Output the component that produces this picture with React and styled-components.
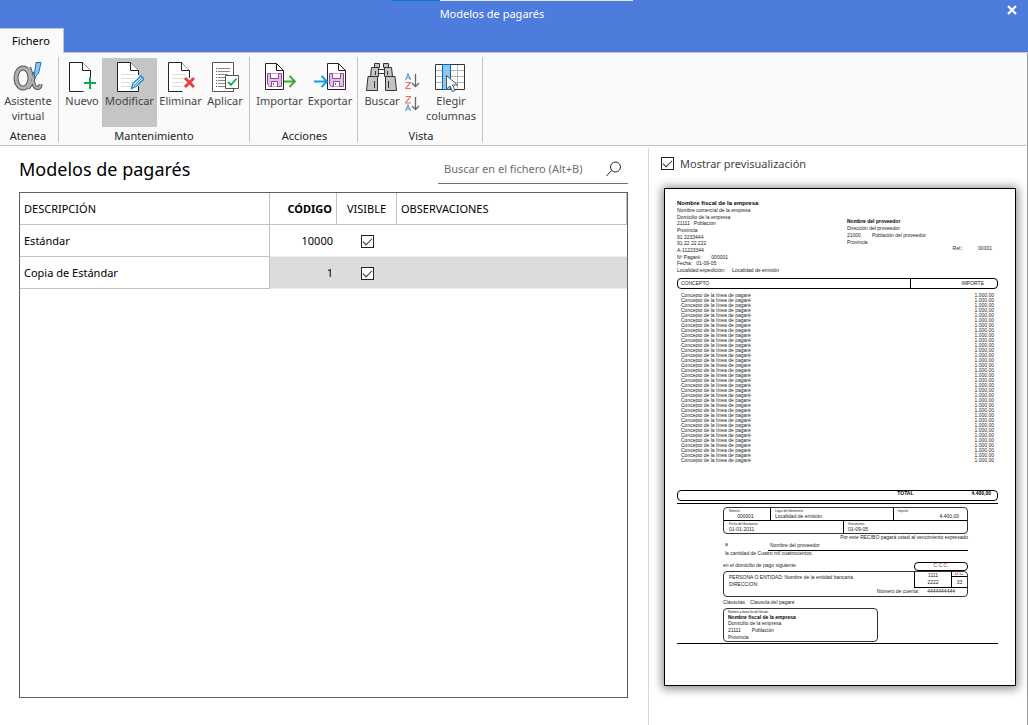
import React from 'react';
import styled, { createGlobalStyle } from 'styled-components';

const Global = createGlobalStyle`
  *, *::before, *::after { box-sizing: border-box; }
  body { margin: 0; background: #fff; }
  button, input { font: inherit; color: inherit; }
`;

const Window = styled.div`
  min-height: 100vh;
  display: flex;
  flex-direction: column;
  background: #fff;
  color: #000;
  font: 11px/15px "Noto Sans", "Open Sans", sans-serif;
`;

/* ---------- title bar ---------- */

const TitleBar = styled.header`
  position: relative;
  display: flex;
  flex-direction: column;
  background: #4d7cdc;
  border-bottom: 1px solid #c3c3c3;
`;

const Progress = styled.div`
  position: absolute;
  top: 0;
  left: 392px;
  width: 241px;
  height: 1px;
  background: linear-gradient(to right, #0078d7 20%, #e6e6e6 20%);
`;

const TitleRow = styled.div`
  display: grid;
  grid-template-columns: 44px 1fr 44px;
  height: 28px;
`;

const WindowTitle = styled.div`
  grid-column: 2;
  text-align: center;
  line-height: 28px;
  color: #fff;
  padding-right: 44px;
`;

const CloseButton = styled.button`
  display: flex;
  justify-content: flex-end;
  border: 0;
  background: none;
  padding: 5px 11px 0 0;
`;

const Tab = styled.button`
  align-self: flex-start;
  height: 25px;
  margin-bottom: -1px;
  padding: 0 13px 2px 12px;
  border: 0;
  border-top: 1px solid #c3c3c3;
  border-right: 1px solid #c3c3c3;
  background: #fafafa;
  color: #000;
`;

/* ---------- ribbon ---------- */

const Ribbon = styled.nav`
  display: flex;
  padding: 4px 0 3px;
  background: #fafafa;
  border-bottom: 1px solid #c3c3c3;
  border-right: 1px solid #999;
`;

const Group = styled.section`
  display: flex;
  flex-direction: column;
  align-items: center;
  padding: 1px ${p => 6 - (p.$start || 3)}px 0 ${p => p.$start || 3}px;
  border-right: 1px solid #c3c3c3;
`;

const GroupLabel = styled.h2`
  margin: 3px 0 0;
  font: inherit;
  line-height: 12px;
  color: #222;
`;

const Tools = styled.div`
  display: flex;
`;

const Tool = styled.button`
  display: flex;
  flex-direction: column;
  align-items: center;
  width: ${p => p.$w}px;
  height: 69px;
  padding: 3px 0 0;
  border: 0;
  background: ${p => (p.$active ? '#c5c5c5' : 'transparent')};
  color: #444;
  white-space: nowrap;
  text-align: center;
`;

const SortTools = styled.div`
  display: flex;
  flex-direction: column;
  gap: 7px;
  width: 20px;
  padding: 15px 0 0 3px;
`;

const SortButton = styled.button`
  display: block;
  padding: 0;
  border: 0;
  background: none;
  height: 16px;
`;

const Icon = styled.svg`
  display: block;
  flex: none;
`;

/* ---------- content ---------- */

const Content = styled.main`
  flex: 1;
  display: grid;
  grid-template-columns: minmax(0, 1fr) 379px;
  border-right: 1px solid #999;
  padding-top: 2px;
`;

const ListPane = styled.section`
  display: flex;
  flex-direction: column;
  padding: 0 20px 27px 19px;
`;

const ListHead = styled.div`
  display: flex;
  justify-content: space-between;
  align-items: flex-start;
  height: 44px;
`;

const Heading = styled.h1`
  margin: 8px 0 0;
  font-size: 18px;
  line-height: 26px;
  font-weight: 400;
`;

const Search = styled.label`
  display: flex;
  align-items: center;
  width: 190px;
  height: 30px;
  margin-top: 6px;
  padding: 0 6px;
  border-bottom: 1px solid #707070;
`;

const SearchInput = styled.input`
  flex: 1;
  min-width: 0;
  padding: 0;
  border: 0;
  outline: 0;
  background: none;
  &::placeholder { color: #6d6d6d; opacity: 1; }
`;

const TableFrame = styled.div`
  flex: 1;
  border: 1px solid #5f5f63;
`;

const Table = styled.table`
  width: 100%;
  table-layout: fixed;
  border-collapse: separate;
  border-spacing: 0;
`;

const Th = styled.th`
  width: ${p => p.$w || 'auto'};
  height: 32px;
  padding: 0 4px;
  border-right: 1px solid #c3c3c3;
  border-bottom: 1px solid #c3c3c3;
  font-weight: ${p => (p.$bold ? 700 : 400)};
  text-align: ${p => p.$align || 'left'};
`;

const Td = styled.td`
  height: 32px;
  padding: 0 4px;
  text-align: ${p => p.$align || 'left'};
  background: ${p => (p.$selected ? '#dcdcdc' : '#fff')};
  border-bottom: 1px solid #eee;
`;

const NameCell = styled(Td)`
  background: #fff;
  border-right: 1px solid #c3c3c3;
  border-bottom: 1px solid #c3c3c3;
`;

const Check = styled.input`
  appearance: none;
  display: inline-block;
  flex: none;
  width: 13px;
  height: 13px;
  margin: 0;
  border: 1px solid #222;
  background: #fff;
  vertical-align: middle;
  &:checked::after {
    content: '';
    display: block;
    width: 9px;
    height: 5px;
    margin: 2px 0 0 1px;
    border: solid #333;
    border-width: 0 0 1px 1px;
    transform: rotate(-45deg);
  }
`;

/* ---------- preview ---------- */

const PreviewPane = styled.aside`
  border-left: 1px solid #d8d8d8;
  padding: 7px 11px 0 15px;
`;

const PreviewToggle = styled.label`
  display: flex;
  align-items: center;
  gap: 6px;
  height: 16px;
  margin: 0 0 17px -3px;
  color: #444;
`;

const Sheet = styled.article`
  height: 498px;
  padding: 10px 17px 0 12px;
  border: 1px solid #000;
  background: #fff;
  box-shadow: 0 1px 9px 2px rgba(0, 0, 0, 0.45);
  color: #222;
  font: 5px/7px "Liberation Sans", Arial, sans-serif;
  white-space: nowrap;
`;

const Parties = styled.div`
  display: grid;
  grid-template-columns: 170px 1fr;
  height: 79px;
`;

const Line = styled.div`
  display: flex;
  gap: ${p => p.$gap || 0}px;
  justify-content: ${p => (p.$end ? 'flex-end' : 'flex-start')};
  font-weight: ${p => (p.$bold ? 700 : 400)};
  line-height: ${p => p.$lh || 7}px;
  color: ${p => (p.$bold ? '#000' : 'inherit')};
`;

const CompanyName = styled(Line)`
  font-size: ${p => (p.$large ? 6 : 5)}px;
`;

const Reference = styled(Line)`
  padding-right: 6px;
`;

const Provider = styled.div`
  padding-top: 18px;
`;

const ConceptHead = styled.div`
  display: grid;
  grid-template-columns: 232px 1fr;
  height: 11px;
  line-height: 9px;
  border: 1px solid #000;
  border-radius: 4px;
  span { padding: 0 3px; }
  span + span { border-left: 1px solid #000; padding-right: 13px; text-align: right; }
`;

const Concepts = styled.div`
  height: 201px;
  padding: 4px 4px 0;
`;

const ConceptLine = styled.div`
  display: flex;
  justify-content: space-between;
  line-height: 5px;
`;

const Total = styled.div`
  display: flex;
  justify-content: flex-end;
  gap: 58px;
  height: 11px;
  padding-right: 6px;
  border: 1px solid #000;
  border-radius: 4px;
  color: #000;
  font-weight: 700;
  line-height: 5px;
`;

const Receipt = styled.div`
  margin-top: 2px;
  padding: 3px 30px 0 46px;
  height: 141px;
  border-top: 1px solid #000;
  border-bottom: 1px solid #000;
`;

const Box = styled.div`
  border: 1px solid #333;
  border-radius: 4px;
`;

const Cells = styled.div`
  display: grid;
  grid-template-columns: ${p => p.$cols};
  height: 12px;
  & + & { height: 13px; border-top: 1px solid #000; }
`;

const Cell = styled.div`
  padding: 1px 8px 0 5px;
  line-height: 7px;
  text-align: ${p => p.$align || 'left'};
  & + & { border-left: 1px solid #000; padding-left: 4px; }
`;

const Caption = styled.div`
  font-size: 3px;
  line-height: 4px;
  text-align: left;
`;

const Payee = styled.div`
  display: grid;
  grid-template-columns: 43px 1fr;
  height: 8px;
  padding-left: 2px;
  line-height: 7px;
  span + span { border-bottom: 1px solid #000; line-height: 9px; padding-left: 2px; }
`;

const Amount = styled(Line)`
  padding-left: 2px;
`;

const Domicile = styled.div`
  display: flex;
  justify-content: space-between;
  align-items: flex-end;
  height: 14px;
  span { padding-bottom: 2px; }
`;

const Ccc = styled.div`
  width: 54px;
  height: 9px;
  border: 1px solid #000;
  border-radius: 4px;
  color: #8a3a3a;
  text-align: center;
  line-height: 4px;
`;

const Bank = styled(Box)`
  display: flex;
  flex-direction: column;
  height: 26px;
`;

const BankTop = styled.div`
  display: flex;
  justify-content: space-between;
  height: 16px;
`;

const BankText = styled.div`
  padding: 2px 0 0 5px;
`;

const Account = styled(Line)`
  padding-right: 12px;
`;

const Codes = styled.div`
  display: grid;
  grid-template-columns: 36px 1fr;
  width: 53px;
  border: solid #000;
  border-width: 0 0 1px 1px;
  text-align: center;
  div + div { border-left: 1px solid #000; }
`;

const Small = styled.p`
  margin: 0;
  height: 5px;
  line-height: 3px;
  border-bottom: 1px solid #000;
  color: #8a3a3a;
`;

const ControlDigits = styled.p`
  margin: 0;
  line-height: 10px;
`;

const Issuer = styled(Box)`
  width: 155px;
  height: 34px;
  padding: 1px 4px 0;
`;

/* ---------- icons ---------- */

const Page = ({ lines, cut }) => (
  <>
    <path d={cut || 'M15.5 30.5H1.5V1.5H14.5L22.5 9.5V17'} fill="#fff" stroke="#222" />
    <path d="M14.5 1.5V9.5H22.5" fill="#fff" stroke="#222" />
    {lines && <path d="M5 13.5H19M5 17.5H19M5 21.5H17M5 25.5H15" stroke="#dcdcdc" />}
  </>
);

const alphaTail = 'M23 11C22 17 19 24 16 27M17 7C20.500 12 20 27 25.500 27C27.500 27 28.500 25.500 28.500 23';

const AlphaIcon = () => (
  <Icon width="32" height="32" viewBox="0 0 32 32" fill="none">
    <ellipse cx="11" cy="17" rx="7" ry="10" stroke="#555" strokeWidth="5" />
    <path d={alphaTail} stroke="#555" strokeWidth="4" />
    <ellipse cx="11" cy="17" rx="7" ry="10" stroke="#b0b0b0" strokeWidth="3" />
    <path d={alphaTail} stroke="#b0b0b0" strokeWidth="2" />
    <path d="M24 1.500H29L26.500 12.500L22 17Z" fill="#8cc8f5" stroke="#1673ba" />
  </Icon>
);

const NewIcon = () => (
  <Icon width="28" height="32" viewBox="0 0 28 32" fill="none">
    <Page />
    <path d="M22 16V28M16 22H28" stroke="#12a84f" strokeWidth="2" />
  </Icon>
);

const EditIcon = () => (
  <Icon width="28" height="32" viewBox="0 0 28 32" fill="none">
    <Page lines cut="M22.500 25V30.500H1.500V1.500H14.500L22.500 9.500V14" />
    <path d="M15.500 27.500L17 22.500L25 15L28 18L20 25.500Z" fill="#d4eaf8" stroke="#2089cc" strokeWidth="1.300" />
    <path d="M18 25L26 17M15.500 27.500L17.500 26" stroke="#2089cc" />
  </Icon>
);

const DeleteIcon = () => (
  <Icon width="28" height="32" viewBox="0 0 28 32" fill="none">
    <Page lines />
    <path d="M18 17L27 26M27 17L18 26" stroke="#ee3e3e" strokeWidth="3" />
  </Icon>
);

const ApplyIcon = () => (
  <Icon width="28" height="32" viewBox="0 0 28 32" fill="none">
    <path d="M22.500 27V30.500H1.500V1.500H22.500V14" fill="#fff" stroke="#555" />
    <path d="M7 7.500H19M7 10.500H19M7 13.500H17M7 16.500H14M7 19.500H14M7 22.500H14M7 25.500H14" stroke="#888" />
    <path d="M5.500 7V8M5.500 13V14M5.500 22V23" stroke="#12a84f" />
    <path d="M5.500 10V11M5.500 16V17M5.500 19V20M5.500 25V26" stroke="#d02020" />
    <path d="M14.500 14.500H27.500V27.500H14.500Z" fill="#fff" stroke="#555" />
    <path d="M17 21L20 24L25.500 17.500" stroke="#12a84f" strokeWidth="1.800" />
  </Icon>
);

const Floppy = ({ x }) => (
  <g transform={`translate(${x} 0)`}>
    <path d="M.5 12.500H14.500V25.500H2.500L.5 23.500Z" fill="#dfc3e3" stroke="#93479c" />
    <path d="M3.500 12.500V17.500H11.500V12.500" fill="#fff" stroke="#93479c" />
    <path d="M4.500 25.500V20.500H10.500V25.500" fill="#fff" stroke="#93479c" />
    <path d="M6.500 22V24" stroke="#93479c" />
  </g>
);

const ImportIcon = () => (
  <Icon width="32" height="32" viewBox="0 0 32 32" fill="none">
    <path d="M1.500 2.500H12.500L19.500 9.500V28.500H1.500Z" fill="#fff" stroke="#222" />
    <path d="M12.500 2.500V9.500H19.500" stroke="#222" />
    <Floppy x={3} />
    <path d="M20 20.500H30M25.500 15L31 20.500L25.500 26" stroke="#3fa535" strokeWidth="1.800" />
  </Icon>
);

const ExportIcon = () => (
  <Icon width="34" height="32" viewBox="0 0 34 32" fill="none">
    <path d="M14.500 2.500H25.500L32.500 9.500V28.500H14.500Z" fill="#fff" stroke="#222" />
    <path d="M25.500 2.500V9.500H32.500" stroke="#222" />
    <Floppy x={16} />
    <path d="M1 20.500H13M8.500 15L14 20.500L8.500 26" stroke="#0c9ae0" strokeWidth="1.800" />
  </Icon>
);

const BinocularsIcon = () => (
  <Icon width="32" height="32" viewBox="0 0 32 32" fill="#c3c3c3" stroke="#333">
    <path d="M8.500 2.500H13.500V6.500H8.500ZM17.500 2.500H22.500V6.500H17.500Z" />
    <path d="M12.500 8.500H18.500V12.500H12.500Z" fill="#fff" />
    <path d="M5.500 6.500H12.500V15.500H4.500ZM18.500 6.500H25.500L26.500 15.500H18.500Z" />
    <path d="M2 15.500H11.500V29.500H.5ZM19.500 15.500H29L30.500 29.500H19.500Z" />
    <path d="M9.500 10V14M21.500 10V14M8.500 20V27M22.500 20V27" />
  </Icon>
);

const SortIcon = ({ down }) => (
  <Icon width="15" height="16" viewBox="0 0 15 16" fill="none">
    <path d={down ? 'M.5 7L3 .5L5.500 7M1.500 5H4.500' : 'M.5 15L3 9L5.500 15M1.500 13H4.500'} stroke="#5aa0d0" strokeWidth="1.200" />
    <path d={down ? 'M.5 9.500H5.500L.5 15.500H6' : 'M.5 .5H5.500L.5 7H6'} stroke="#ef6b6b" strokeWidth="1.200" />
    <path d="M10.500 1V14M7 10L10.500 13.500L14 10" stroke="#666" strokeWidth="1.300" />
  </Icon>
);

const ColumnsIcon = () => (
  <Icon width="32" height="32" viewBox="0 0 32 32" fill="none">
    <path d="M.5 3.500H29.500V28.500H.5Z" fill="#fff" stroke="#333" />
    <path d="M1 9.500H29M1 15.500H29M1 21.500H29M22.500 4V28" stroke="#b5b5b5" />
    <path d="M7.500 3.500H15.500V28.500H7.500Z" fill="#8ec7ef" stroke="#0a66ae" />
    <path d="M11.500 14.500V28L15 25L17.500 30.500L20 29.500L17.500 24H22.500Z" fill="#fff" stroke="#555" />
  </Icon>
);

const SearchIcon = () => (
  <Icon width="16" height="16" viewBox="0 0 16 16" fill="none" stroke="#222">
    <circle cx="9.500" cy="6" r="5" />
    <path d="M5.500 9.500L.5 15" />
  </Icon>
);

const CloseIcon = () => (
  <Icon width="10" height="10" viewBox="0 0 10 10">
    <path d="M1 1L9 9M9 1L1 9" stroke="#fff" strokeWidth="2.200" />
  </Icon>
);

/* ---------- data ---------- */

const rows = [
  { name: 'Estándar', code: 10000 },
  { name: 'Copia de Estándar', code: 1, selected: true },
];

const concepts = Array.from({ length: 34 }, () => ({
  text: 'Concepto de la línea de pagaré',
  amount: '1.000,00',
}));

function Preview() {
  return (
    <Sheet>
      <Parties>
        <div>
          <CompanyName $bold $large $lh={8}>Nombre fiscal de la empresa</CompanyName>
          <Line>Nombre comercial de la empresa</Line>
          <Line $lh={6}>Domicilio de la empresa</Line>
          <Line $gap={4}><span>21111</span><span>Población</span></Line>
          <Line>Provincia</Line>
          <Line $lh={6}>91 2233444</Line>
          <Line>91 22 22 222</Line>
          <Line>A-11223344</Line>
          <Line $gap={10} $lh={6}><span>Nº Pagaré:</span><span>000001</span></Line>
          <Line $gap={4}><span>Fecha:</span><span>01-09-05</span></Line>
          <Line $gap={7}><span>Localidad expedición:</span><span>Localidad de emisión</span></Line>
        </div>
        <Provider>
          <CompanyName $bold $lh={8}>Nombre del proveedor</CompanyName>
          <Line>Dirección del proveedor</Line>
          <Line $gap={11}><span>21000</span><span>Población del proveedor</span></Line>
          <Line>Provincia</Line>
          <Reference $end $gap={15} $lh={5}><span>Ref.:</span><span>00001</span></Reference>
        </Provider>
      </Parties>
      <ConceptHead><span>CONCEPTO</span><span>IMPORTE</span></ConceptHead>
      <Concepts>
        {concepts.map((c, i) => (
          <ConceptLine key={i}><span>{c.text}</span><span>{c.amount}</span></ConceptLine>
        ))}
      </Concepts>
      <Total><span>TOTAL</span><span>4.400,00</span></Total>
      <Receipt>
        <Box>
          <Cells $cols="46px 123px 1fr">
            <Cell $align="center"><Caption>Número</Caption>000001</Cell>
            <Cell><Caption>Lugar del libramiento</Caption>Localidad de emisión</Cell>
            <Cell $align="right"><Caption>Importe</Caption>4.400,00</Cell>
          </Cells>
          <Cells $cols="119px 1fr">
            <Cell><Caption>Fecha del libramiento</Caption>01-01-2011</Cell>
            <Cell><Caption>Vencimiento</Caption>01-09-05</Cell>
          </Cells>
        </Box>
        <Line $end>Por este RECIBO pagará usted al vencimiento expresado</Line>
        <Payee><span>a</span><span>Nombre del proveedor</span></Payee>
        <Amount $lh={8}>la cantidad de Cuatro mil cuatrocientos.</Amount>
        <Domicile><span>en el domicilio de pago siguiente:</span><Ccc>C.C.C.</Ccc></Domicile>
        <Bank>
          <BankTop>
            <BankText>
              <Line>PERSONA O ENTIDAD: Nombre de la entidad bancaria</Line>
              <Line $lh={6}>DIRECCION:</Line>
            </BankText>
            <Codes>
              <div>1111<br />2222</div>
              <div><Small>D.C.</Small><ControlDigits>33</ControlDigits></div>
            </Codes>
          </BankTop>
          <Account $end $gap={8}><span>Número de cuenta:</span><span>4444444444</span></Account>
        </Bank>
        <Line $gap={5} $lh={11}><span>Cláusulas</span><span>Clausula del pagaré</span></Line>
        <Issuer>
          <Caption>Nombre y domicilio del librado</Caption>
          <Line $bold $lh={6}>Nombre fiscal de la empresa</Line>
          <Line>Domicilio de la empresa</Line>
          <Line $gap={11}><span>21111</span><span>Población</span></Line>
          <Line>Provincia</Line>
        </Issuer>
      </Receipt>
    </Sheet>
  );
}

export default function App() {
  return (
    <Window>
      <Global />
      <TitleBar>
        <Progress />
        <TitleRow>
          <WindowTitle>Modelos de pagarés</WindowTitle>
          <CloseButton aria-label="Cerrar"><CloseIcon /></CloseButton>
        </TitleRow>
        <Tab>Fichero</Tab>
      </TitleBar>

      <Ribbon>
        <Group $start={2}>
          <Tools>
            <Tool $w={52}><AlphaIcon />Asistente<br />virtual</Tool>
          </Tools>
          <GroupLabel>Atenea</GroupLabel>
        </Group>
        <Group>
          <Tools>
            <Tool $w={40}><NewIcon />Nuevo</Tool>
            <Tool $w={55} $active><EditIcon />Modificar</Tool>
            <Tool $w={47}><DeleteIcon />Eliminar</Tool>
            <Tool $w={42}><ApplyIcon />Aplicar</Tool>
          </Tools>
          <GroupLabel>Mantenimiento</GroupLabel>
        </Group>
        <Group $start={4}>
          <Tools>
            <Tool $w={51}><ImportIcon />Importar</Tool>
            <Tool $w={50}><ExportIcon />Exportar</Tool>
          </Tools>
          <GroupLabel>Acciones</GroupLabel>
        </Group>
        <Group $start={4}>
          <Tools>
            <Tool $w={40}><BinocularsIcon />Buscar</Tool>
            <SortTools>
              <SortButton aria-label="Orden ascendente"><SortIcon down /></SortButton>
              <SortButton aria-label="Orden descendente"><SortIcon /></SortButton>
            </SortTools>
            <Tool $w={58}><ColumnsIcon />Elegir<br />columnas</Tool>
          </Tools>
          <GroupLabel>Vista</GroupLabel>
        </Group>
      </Ribbon>

      <Content>
        <ListPane>
          <ListHead>
            <Heading>Modelos de pagarés</Heading>
            <Search>
              <SearchInput type="text" aria-label="Buscar en el fichero" placeholder="Buscar en el fichero (Alt+B)" />
              <SearchIcon />
            </Search>
          </ListHead>
          <TableFrame>
            <Table>
              <thead>
                <tr>
                  <Th $w="250px">DESCRIPCIÓN</Th>
                  <Th $w="67px" $align="right" $bold>CÓDIGO</Th>
                  <Th $w="60px" $align="center">VISIBLE</Th>
                  <Th>OBSERVACIONES</Th>
                </tr>
              </thead>
              <tbody>
                {rows.map(r => (
                  <tr key={r.name}>
                    <NameCell>{r.name}</NameCell>
                    <Td $align="right" $selected={r.selected}>{r.code}</Td>
                    <Td $align="center" $selected={r.selected}>
                      <Check type="checkbox" defaultChecked aria-label={`Visible: ${r.name}`} />
                    </Td>
                    <Td $selected={r.selected} />
                  </tr>
                ))}
              </tbody>
            </Table>
          </TableFrame>
        </ListPane>

        <PreviewPane>
          <PreviewToggle>
            <Check type="checkbox" defaultChecked />
            Mostrar previsualización
          </PreviewToggle>
          <Preview />
        </PreviewPane>
      </Content>
    </Window>
  );
}
